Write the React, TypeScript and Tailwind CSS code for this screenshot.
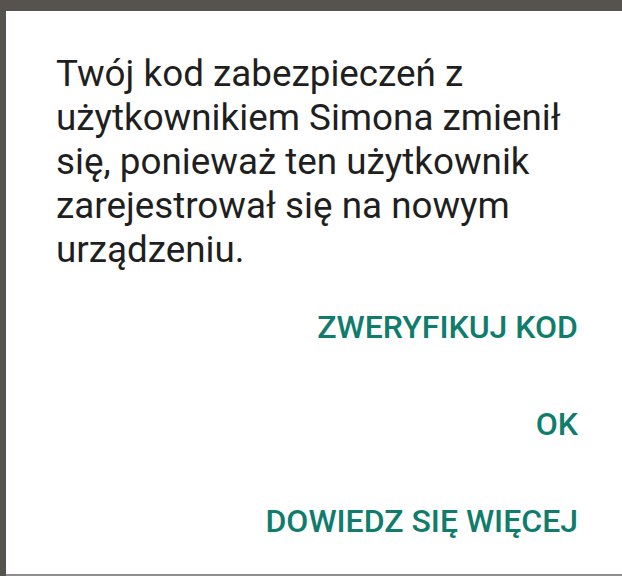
export default function App() {
  return (
    <div className="w-[622px] h-[576px] bg-[#56524d] pt-[11px] pl-[6px] flex flex-col overflow-hidden">
      <div className="flex-1 bg-white border-b-2 border-[#8e8e8e] flex flex-col" style={{ fontFamily: "Roboto, 'Noto Sans', sans-serif" }}>
        <p className="pl-[50px] pr-[20px] pt-[41px] text-[36.8px] leading-[44px] text-[#1f1f1f] whitespace-nowrap">
          Twój kod zabezpieczeń z<br />
          użytkownikiem Simona zmienił<br />
          się, ponieważ ten użytkownik<br />
          zarejestrował się na nowym<br />
          urządzeniu.
        </p>
        <div className="flex flex-col items-end pr-[44px] mt-[36px] gap-[58px] text-[#0f7c6c] font-medium text-[32px] leading-[39px] whitespace-nowrap">
          <span>ZWERYFIKUJ KOD</span>
          <span>OK</span>
          <span>DOWIEDZ SIĘ WIĘCEJ</span>
        </div>
      </div>
    </div>
  );
}
